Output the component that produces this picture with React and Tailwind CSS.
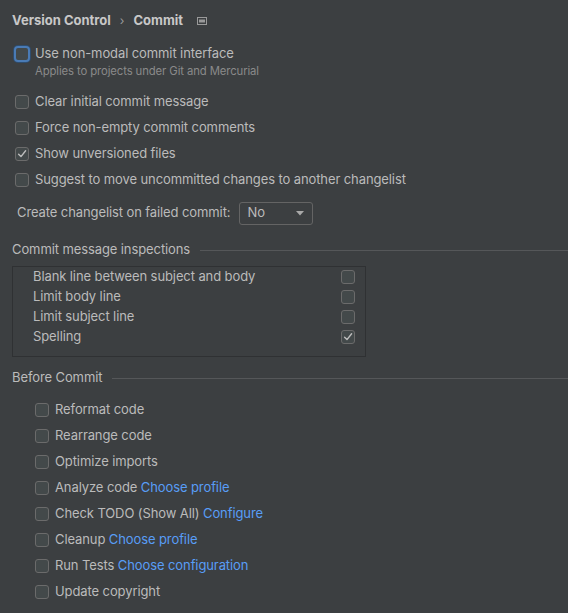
import React from "react";

const Check = () => (
  <svg width="10" height="10" viewBox="0 0 10 10" className="block">
    <path d="M1.6 5.2 L4 7.6 L8.6 1.8" fill="none" stroke="#bdbdbd" strokeWidth="1.4" strokeLinecap="round" strokeLinejoin="round" />
  </svg>
);

const Box = ({ checked, focused }) => {
  if (focused) {
    return (
      <span className="flex h-[16px] w-[16px] shrink-0 items-center justify-center rounded-[4px] border-2 border-[#4a7bb5] bg-[#43494a] shadow-[0_0_0_1px_#2f4d6e]" />
    );
  }
  return (
    <span className="flex h-[14px] w-[14px] shrink-0 items-center justify-center rounded-[3px] border border-[#6b6b6b] bg-[#43494a]">
      {checked && <Check />}
    </span>
  );
};

const Row = ({ label, checked, link, indent }) => (
  <div className={"flex h-[26px] items-center gap-[6px] " + (indent ? "pl-[35px]" : "pl-[15px]")}>
    <Box checked={checked} />
    <span>
      {label}
      {link && <span className="text-[#589df6]"> {link}</span>}
    </span>
  </div>
);

const Section = ({ title }) => (
  <div className="flex h-[20px] items-center pl-[12px]">
    <span className="whitespace-nowrap">{title}</span>
    <span className="ml-[10px] h-px flex-1 bg-[#555759]" />
  </div>
);

export default function App() {
  const inspections = [
    { label: "Blank line between subject and body" },
    { label: "Limit body line" },
    { label: "Limit subject line" },
    { label: "Spelling", checked: true },
  ];

  const beforeCommit = [
    { label: "Reformat code" },
    { label: "Rearrange code" },
    { label: "Optimize imports" },
    { label: "Analyze code", link: "Choose profile" },
    { label: "Check TODO (Show All)", link: "Configure" },
    { label: "Cleanup", link: "Choose profile" },
    { label: "Run Tests", link: "Choose configuration" },
    { label: "Update copyright" },
  ];

  return (
    <div className="h-[613px] w-[568px] overflow-hidden bg-[#3c3f41] font-['Inter',sans-serif] text-[13px] tracking-[-0.1px] text-[#bbbbbb]">
      {/* breadcrumb */}
      <div className="flex h-[41px] items-center pl-[12px] font-bold tracking-normal text-[#c8c8c8]">
        <span>Version Control</span>
        <span className="mx-[9px] text-[12px] font-normal text-[#9a9a9a]">›</span>
        <span>Commit</span>
        <svg width="10" height="8" viewBox="0 0 10 8" className="ml-[14px]">
          <rect x="0.5" y="0.5" width="9" height="7" fill="none" stroke="#9a9a9a" />
          <rect x="2" y="2.5" width="6" height="3" fill="#9a9a9a" />
        </svg>
      </div>

      <div className="flex h-[26px] items-center gap-[5px] pl-[14px]">
        <Box focused />
        <span>Use non-modal commit interface</span>
      </div>
      <div className="-mt-[2px] h-[12px] pl-[35px] text-[11.3px] leading-[12px] text-[#8a8a8a]">
        Applies to projects under Git and Mercurial
      </div>

      <div className="mt-[12px]">
        <Row label="Clear initial commit message" />
        <Row label="Force non-empty commit comments" />
        <Row label="Show unversioned files" checked />
        <Row label="Suggest to move uncommitted changes to another changelist" />
      </div>

      <div className="mt-[6px] flex h-[28px] items-center pl-[17px]">
        <span>Create changelist on failed commit:</span>
        <div className="ml-[9px] flex h-[23px] w-[74px] items-center justify-between rounded-[3px] border border-[#646464] pl-[7px] pr-[8px]">
          <span>No</span>
          <svg width="8" height="5" viewBox="0 0 8 5">
            <path d="M0 0 H8 L4 4.5 Z" fill="#a9a9a9" />
          </svg>
        </div>
      </div>

      <div className="mt-[13px]">
        <Section title="Commit message inspections" />
      </div>

      <div className="ml-[12px] mt-[6px] w-[354px] border border-[#2f3133] pb-[9px] pl-[20px] pr-[10px]">
        {inspections.map((item, i) => (
          <div key={i} className="flex h-[20px] items-center justify-between">
            <span>{item.label}</span>
            <Box checked={item.checked} />
          </div>
        ))}
      </div>

      <div className="mt-[11px]">
        <Section title="Before Commit" />
      </div>

      <div className="mt-[9px]">
        {beforeCommit.map((item, i) => (
          <Row key={i} label={item.label} link={item.link} checked={item.checked} indent />
        ))}
      </div>
    </div>
  );
}
